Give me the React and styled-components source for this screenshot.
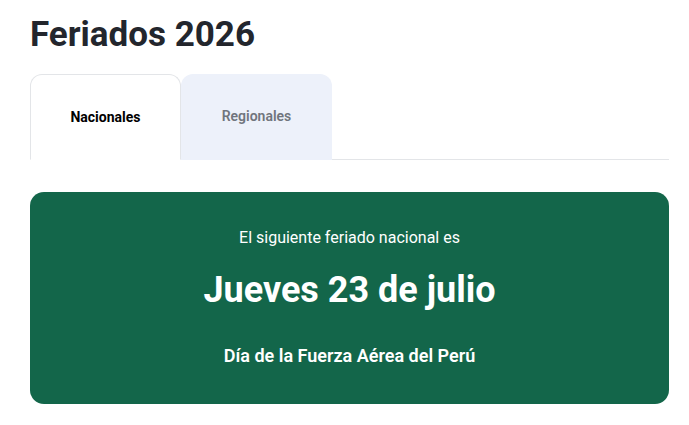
import styled, { createGlobalStyle } from "styled-components";

const GlobalStyle = createGlobalStyle`
    body {
        margin: 0;
        background: #ffffff;
        font-family: Roboto, "Liberation Sans", sans-serif;
    }
`;

const Page = styled.main`
    padding: 14px 20px 0 30px;
`;

const Title = styled.h1`
    margin: 0;
    font-size: 35px;
    font-weight: 700;
    line-height: 42px;
    color: #23262d;
`;

const TabList = styled.div`
    display: flex;
    margin-top: 18px;
    border-bottom: 1px solid #e3e5e8;
`;

const Tab = styled.button`
    width: 151px;
    height: 86px;
    margin-bottom: -1px;
    border: 1px solid ${({ $active }) => ($active ? "#e3e5e8" : "transparent")};
    border-bottom-color: ${({ $active }) => ($active ? "#ffffff" : "transparent")};
    border-radius: 12px 12px 0 0;
    background: ${({ $active }) => ($active ? "#ffffff" : "#edf1fa")};
    color: ${({ $active }) => ($active ? "#000000" : "#70757d")};
    font-family: inherit;
    font-size: 14px;
    font-weight: ${({ $active }) => ($active ? 700 : 600)};
    padding: ${({ $active }) => ($active ? "0" : "0 0 2px")};
    cursor: pointer;
`;

const Card = styled.section`
    margin-top: 32px;
    height: 212px;
    border-radius: 14px;
    background: #13664a;
    color: #ffffff;
    display: flex;
    flex-direction: column;
    align-items: center;
    padding-top: 36px;
    box-sizing: border-box;
`;

const Lead = styled.p`
    margin: 0;
    font-size: 16px;
    line-height: 20px;
`;

const DateLine = styled.h2`
    margin: 21px 0 0;
    font-size: 36px;
    font-weight: 700;
    line-height: 42px;
`;

const HolidayName = styled.p`
    margin: 34px 0 0;
    font-size: 18px;
    font-weight: 600;
    line-height: 22px;
`;

const App = () => {
	return (
		<Page>
			<GlobalStyle/>
			<Title>Feriados 2026</Title>
			<TabList>
				<Tab $active>Nacionales</Tab>
				<Tab>Regionales</Tab>
			</TabList>
			<Card>
				<Lead>El siguiente feriado nacional es</Lead>
				<DateLine>Jueves 23 de julio</DateLine>
				<HolidayName>Día de la Fuerza Aérea del Perú</HolidayName>
			</Card>
		</Page>
	);
};

export default App;
